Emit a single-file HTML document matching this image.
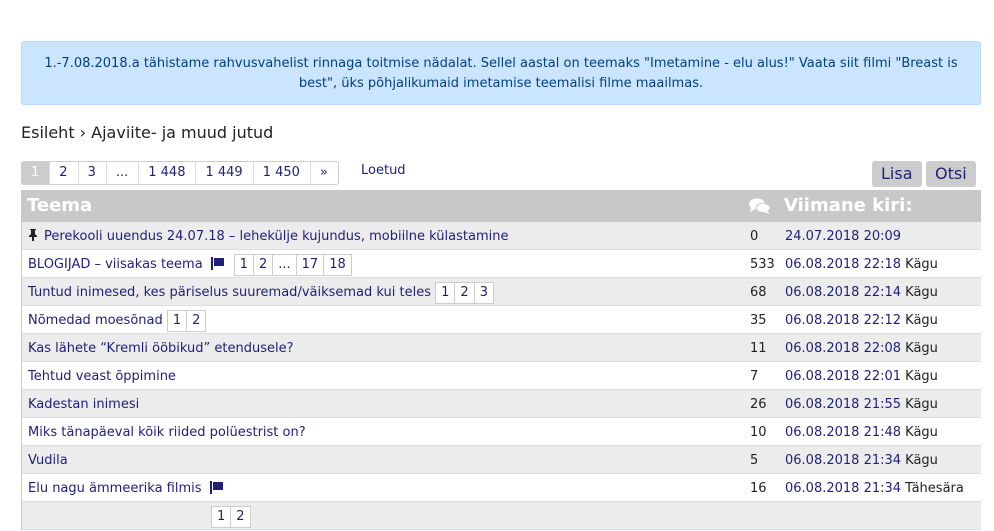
<!DOCTYPE html>
<html><head><meta charset="utf-8"><style>
*{margin:0;padding:0;box-sizing:border-box}
body{width:994px;height:511px;overflow:hidden;background:#fff;font-family:"DejaVu Sans",Verdana,sans-serif;font-size:13px;color:#222;position:relative}
a{color:#1f1f7a;text-decoration:none}
.notice{position:absolute;left:21px;top:41px;width:960px;height:64px;background:#cce5ff;border:1px solid #b8daff;border-radius:3px;color:#004085;text-align:center;padding:12px 16px 0;line-height:20px;font-size:13px}
.bc{position:absolute;left:21px;top:123px;font-size:16px;color:#222}
.pg{position:absolute;left:21px;top:161px;height:24px;display:flex;border:1px solid #ccc;border-radius:3px;overflow:hidden}
.pg span{height:22px;line-height:22px;padding:0 10px 0 9px;border-left:1px solid #ddd;color:#1f1f7a;font-size:13px}
.pg span:first-child{border-left:0;background:#ccc;color:#fff}
.loet{position:absolute;left:361px;top:163px;color:#1f1f7a}
.btn{position:absolute;top:161px;height:26px;line-height:26px;background:#ccc;border-radius:3px;color:#1f1f7a;font-size:16px;padding:0 9px}
.hdr{position:absolute;left:21px;top:190px;width:960px;height:32px;background:#c8c8c8;color:#fff;font-size:18px;font-weight:bold}
.row{position:absolute;left:21px;width:960px;height:28px;border-left:1px solid #ccc;border-bottom:1px solid #ddd;line-height:29px}
.g{background:#ececec}
.t{position:absolute;left:6px;top:0;white-space:nowrap}
.c{position:absolute;left:728px;top:0;color:#222}
.d{position:absolute;left:763px;top:0;white-space:nowrap;color:#222}
.p{display:inline-block;border:1px solid #ccc;background:#fff;height:22px;line-height:20px;padding:0 5px;margin-left:-1px;vertical-align:middle;color:#1f1f7a;font-size:13px}
.flag{display:inline-block;width:14px;height:13px;vertical-align:-2px;margin:0 10px 0 8px}
</style></head><body>
<div class="notice">1.-7.08.2018.a tähistame rahvusvahelist rinnaga toitmise nädalat. Sellel aastal on teemaks "Imetamine - elu alus!" Vaata siit filmi "Breast is best", üks põhjalikumaid imetamise teemalisi filme maailmas.</div>
<div class="bc">Esileht › Ajaviite- ja muud jutud</div>
<div class="pg"><span>1</span><span>2</span><span>3</span><span>...</span><span>1 448</span><span>1 449</span><span>1 450</span><span>»</span></div>
<div class="loet">Loetud</div>
<div class="btn" style="left:872px">Lisa</div>
<div class="btn" style="left:926px">Otsi</div>
<div class="hdr"><span style="position:absolute;left:6px;top:5px">Teema</span>
<svg style="position:absolute;left:728px;top:8px" width="22" height="17" viewBox="0 0 22 17"><ellipse cx="8" cy="6" rx="8" ry="5.5" fill="#fff"/><path d="M2 10 L1 14 L6 11Z" fill="#fff"/><ellipse cx="14" cy="10" rx="7" ry="4.5" fill="#fff" stroke="#c8c8c8" stroke-width="1"/><path d="M18 13 L21 16 L15 14Z" fill="#fff"/></svg>
<span style="position:absolute;left:763px;top:5px">Viimane kiri:</span></div>

<div class="row g" style="top:222px"><span class="t"><svg width="10" height="12" viewBox="0 0 10 12" style="margin-right:6px;vertical-align:-1px"><path d="M2 0h6v1h-1v4l2 2v1H6v4H4V8H1V7l2-2V1H2z" fill="#222"/></svg><a>Perekooli uuendus 24.07.18 – lehekülje kujundus, mobiilne külastamine</a></span><span class="c">0</span><span class="d"><a>24.07.2018 20:09</a></span></div>
<div class="row" style="top:250px"><span class="t"><a>BLOGIJAD – viisakas teema</a><svg class="flag" viewBox="0 0 14 13"><rect x="0" y="0" width="2" height="13" fill="#1f1f7a"/><rect x="3" y="1" width="10" height="8" fill="#1f1f7a"/></svg><span class="p">1</span><span class="p">2</span><span class="p">...</span><span class="p">17</span><span class="p">18</span></span><span class="c">533</span><span class="d"><a>06.08.2018 22:18</a> Kägu</span></div>
<div class="row g" style="top:278px"><span class="t"><a>Tuntud inimesed, kes päriselus suuremad/väiksemad kui teles</a> <span class="p" style="margin-left:0">1</span><span class="p">2</span><span class="p">3</span></span><span class="c">68</span><span class="d"><a>06.08.2018 22:14</a> Kägu</span></div>
<div class="row" style="top:306px"><span class="t"><a>Nõmedad moesõnad</a> <span class="p" style="margin-left:0">1</span><span class="p">2</span></span><span class="c">35</span><span class="d"><a>06.08.2018 22:12</a> Kägu</span></div>
<div class="row g" style="top:334px"><span class="t"><a>Kas lähete “Kremli ööbikud” etendusele?</a></span><span class="c">11</span><span class="d"><a>06.08.2018 22:08</a> Kägu</span></div>
<div class="row" style="top:362px"><span class="t"><a>Tehtud veast õppimine</a></span><span class="c">7</span><span class="d"><a>06.08.2018 22:01</a> Kägu</span></div>
<div class="row g" style="top:390px"><span class="t"><a>Kadestan inimesi</a></span><span class="c">26</span><span class="d"><a>06.08.2018 21:55</a> Kägu</span></div>
<div class="row" style="top:418px"><span class="t"><a>Miks tänapäeval kõik riided polüestrist on?</a></span><span class="c">10</span><span class="d"><a>06.08.2018 21:48</a> Kägu</span></div>
<div class="row g" style="top:446px"><span class="t"><a>Vudila</a></span><span class="c">5</span><span class="d"><a>06.08.2018 21:34</a> Kägu</span></div>
<div class="row" style="top:474px"><span class="t"><a>Elu nagu ämmeerika filmis</a><svg class="flag" viewBox="0 0 14 13"><rect x="0" y="0" width="2" height="13" fill="#1f1f7a"/><rect x="3" y="1" width="10" height="8" fill="#1f1f7a"/></svg></span><span class="c">16</span><span class="d"><a>06.08.2018 21:34</a> Tähesära</span></div>
<div class="row g" style="top:502px"><span class="t" style="left:190px"><span class="p">1</span><span class="p">2</span></span></div>
</body></html>
